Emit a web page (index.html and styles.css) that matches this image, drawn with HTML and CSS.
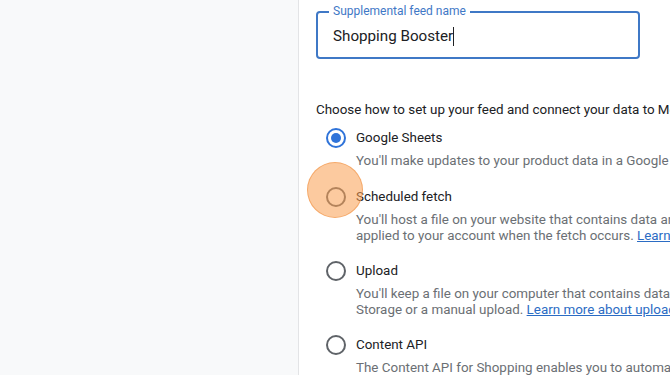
FILE: index.html
```html
<!DOCTYPE html>
<html>
<head>
<meta charset="utf-8">
<link rel="stylesheet" href="styles.css">
</head>
<body>
<div class="page">
  <aside class="side"></aside>
  <main class="main">
    <div class="field">
      <span class="field-label">Supplemental feed name</span>
      <span class="field-value">Shopping Booster</span><span class="caret"></span>
    </div>
    <p class="prompt">Choose how to set up your feed and connect your data to Merchant Center</p>
    <div class="options">
      <div class="option first">
        <span class="radio checked"></span>
        <div class="opt-body">
          <div class="opt-title">Google Sheets</div>
          <div class="opt-desc">You'll make updates to your product data in a Google Sheets spreadsheet</div>
        </div>
      </div>
      <div class="option">
        <span class="radio"></span>
        <div class="opt-body">
          <div class="opt-title">Scheduled fetch</div>
          <div class="opt-desc">You'll host a file on your website that contains data and schedule a regular time<br>applied to your account when the fetch occurs. <a href="#">Learn more about scheduled fetches</a></div>
        </div>
        <span class="click-marker"></span>
      </div>
      <div class="option">
        <span class="radio"></span>
        <div class="opt-body">
          <div class="opt-title">Upload</div>
          <div class="opt-desc">You'll keep a file on your computer that contains data and regularly upload it via SFTP, FTP, Google Cloud<br>Storage or a manual upload. <a href="#">Learn more about uploads</a></div>
        </div>
      </div>
      <div class="option">
        <span class="radio"></span>
        <div class="opt-body">
          <div class="opt-title">Content API</div>
          <div class="opt-desc">The Content API for Shopping enables you to automatically upload product listings</div>
        </div>
      </div>
    </div>
  </main>
</div>
</body>
</html>
```

FILE: styles.css
```css
html, body {
  margin: 0;
  padding: 0;
  width: 670px;
  height: 375px;
  overflow: hidden;
  background: #ffffff;
  font-family: Roboto, "Liberation Sans", Arial, sans-serif;
}
.page {
  display: flex;
  height: 375px;
}
.side {
  width: 298px;
  flex: none;
  background: #f8f9fa;
  border-right: 1px solid #e3e4e6;
}
.main {
  flex: 1;
  padding: 11px 0 0 17px;
  white-space: nowrap;
  overflow: hidden;
}
.field {
  position: relative;
  box-sizing: border-box;
  width: 324px;
  height: 48px;
  border: 2px solid #3f78c6;
  border-radius: 4px;
  padding: 0 0 0 15px;
  display: flex;
  align-items: center;
}
.field-label {
  position: absolute;
  left: 11px;
  top: -9px;
  padding: 0 4px;
  background: #ffffff;
  font-size: 12px;
  line-height: 14px;
  color: #3f78c6;
}
.field-value {
  font-size: 15.2px;
  line-height: 20px;
  color: #202124;
  position: relative;
  top: 1px;
}
.caret {
  display: inline-block;
  width: 1px;
  height: 19px;
  background: #202124;
  position: relative;
  top: 1px;
}
.prompt {
  margin: 41px 0 0 0;
  font-size: 13.4px;
  line-height: 20px;
  color: #202124;
}
.options {
  margin-top: 8px;
  padding-left: 10px;
  display: flex;
  flex-direction: column;
  gap: 17px;
}
.option {
  position: relative;
  display: flex;
  gap: 10px;
  align-items: flex-start;
}
.option.first {
  margin-bottom: 1px;
}
.radio {
  box-sizing: border-box;
  width: 20px;
  height: 20px;
  border: 2px solid #5f6368;
  border-radius: 50%;
  flex: none;
  position: relative;
}
.radio.checked {
  border-color: #2f73d9;
}
.radio.checked::after {
  content: "";
  position: absolute;
  left: 3px;
  top: 3px;
  width: 10px;
  height: 10px;
  border-radius: 50%;
  background: #2f73d9;
}
.opt-title {
  font-size: 13.4px;
  line-height: 20px;
  color: #202124;
}
.opt-desc {
  margin-top: 5px;
  font-size: 13.4px;
  line-height: 16px;
  color: #6b6f74;
}
.opt-desc a {
  color: #2b6cc4;
  text-decoration: underline;
}
.click-marker {
  position: absolute;
  left: -19px;
  top: -25px;
  width: 54px;
  height: 54px;
  border-radius: 50%;
  background: rgba(250, 158, 80, 0.55);
  border: 1px solid rgba(238, 140, 60, 0.55);
}
```
